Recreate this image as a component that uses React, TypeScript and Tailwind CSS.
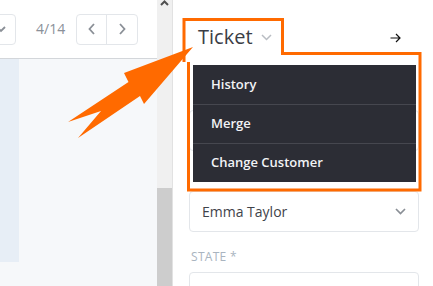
import React from "react";

const font = { fontFamily: '"Open Sans", "Noto Sans", sans-serif' };

function ChevronDown({ className, color = "#8a8f96", w = 10, sw = 1.6 }: { className?: string; color?: string; w?: number; sw?: number }) {
  return (
    <svg width={w} height={w / 2 + 2} viewBox={`0 0 ${w} ${w / 2 + 2}`} className={className}>
      <polyline points={`1,1 ${w / 2},${w / 2} ${w - 1},1`} fill="none" stroke={color} strokeWidth={sw} />
    </svg>
  );
}

export default function App() {
  return (
    <div className="relative flex w-[433px] h-[286px] overflow-hidden bg-white" style={font}>
      {/* Left area */}
      <div className="flex flex-col w-[157px] shrink-0">
        <div className="h-[59px] shrink-0 bg-white border-b border-[#d3d6da] flex items-center">
          <div className="-ml-[24px] w-[40px] h-[31px] border border-[#e3e6ea] rounded-[4px] flex items-center justify-end pr-[9px]">
            <ChevronDown color="#8a8f96" w={10} sw={1.8} />
          </div>
          <div className="ml-[20px] text-[14px] leading-[18px] text-[#8a9099]">4/14</div>
          <div className="ml-[11px] flex h-[31px] border border-[#e3e6ea] rounded-[4px]">
            <div className="w-[30px] flex items-center justify-center border-r border-[#e3e6ea]">
              <svg width="8" height="12" viewBox="0 0 8 12"><polyline points="6,1 1.5,6 6,11" fill="none" stroke="#8a8f96" strokeWidth="1.8" /></svg>
            </div>
            <div className="w-[30px] flex items-center justify-center">
              <svg width="8" height="12" viewBox="0 0 8 12"><polyline points="2,1 6.5,6 2,11" fill="none" stroke="#8a8f96" strokeWidth="1.8" /></svg>
            </div>
          </div>
        </div>
        <div className="flex-1 bg-[#f6f8fa]">
          <div className="w-[19px] h-[203px] bg-[#e7eef6]" />
        </div>
      </div>

      {/* Scrollbar */}
      <div className="w-[15px] shrink-0 bg-[#f0f0f0] flex flex-col">
        <div className="h-[188px] flex justify-center">
          <svg width="9" height="6" viewBox="0 0 9 6"><polyline points="1,5 4.5,1.5 8,5" fill="none" stroke="#505050" strokeWidth="2" /></svg>
        </div>
        <div className="flex-1 bg-[#cdcdcd]" />
      </div>
      <div className="w-px shrink-0 bg-[#e2e2e2]" />

      {/* Right panel */}
      <div className="flex-1 flex flex-col pl-[16px] pr-[14px] bg-white">
        <div className="pt-[24px] flex items-center h-[50px]">
          <span className="ml-[9px] text-[20px] leading-[26px] text-[#3b3e45]">Ticket</span>
          <ChevronDown className="ml-[8px] mt-[2px]" color="#b9bdc3" w={11} sw={1.5} />
          <svg className="ml-auto mr-[18px] mt-[1px]" width="11" height="10" viewBox="0 0 11 10">
            <path d="M0.5 5H10 M6 1L10 5L6 9" fill="none" stroke="#111" strokeWidth="1.2" />
          </svg>
        </div>
        <div className="mt-[37px] flex flex-col">
          {[
            { label: "", value: "" },
            { label: "", value: "Emma Taylor" },
            { label: "STATE *", value: "" },
          ].map((f, i) => (
            <div key={i} className="flex flex-col mb-[17px]">
              <div className="ml-[2px] h-[16px] text-[12px] leading-[16px] tracking-[0.3px] text-[#a9b4c0]">{f.label}</div>
              <div className="mt-[7px] h-[41px] border border-[#e3e6ea] rounded-[4px] flex items-center pl-[12px] pr-[12px]">
                <span className="text-[14px] text-[#3f434a]">{f.value}</span>
                <ChevronDown className="ml-auto" color="#8a8f96" w={11} sw={1.7} />
              </div>
            </div>
          ))}
        </div>
      </div>

      {/* Dropdown menu */}
      <div className="absolute left-[193px] top-[65px] w-[223px] bg-[#2c2d35] flex flex-col">
        {["History", "Merge", "Change Customer"].map((t, i) => (
          <div key={t} className={`h-[39px] flex items-center pl-[18px] text-[13px] font-semibold text-[#f2f3f5] ${i > 0 ? "border-t border-[#46474f]" : ""}`}>
            {t}
          </div>
        ))}
      </div>

      {/* Annotation overlay */}
      <svg className="absolute left-0 top-0 pointer-events-none" width="433" height="286" viewBox="0 0 433 286">
        <path d="M184 62 V19.5 H282.5 V53.5 H420 V190 H188.5 V62" fill="none" stroke="#ff6a00" strokeWidth="3" />
        <polygon points="193,47 124,73 128.5,82 68,122 101,111 78,138 140,96 144,104" fill="#ff6a00" />
      </svg>
    </div>
  );
}
